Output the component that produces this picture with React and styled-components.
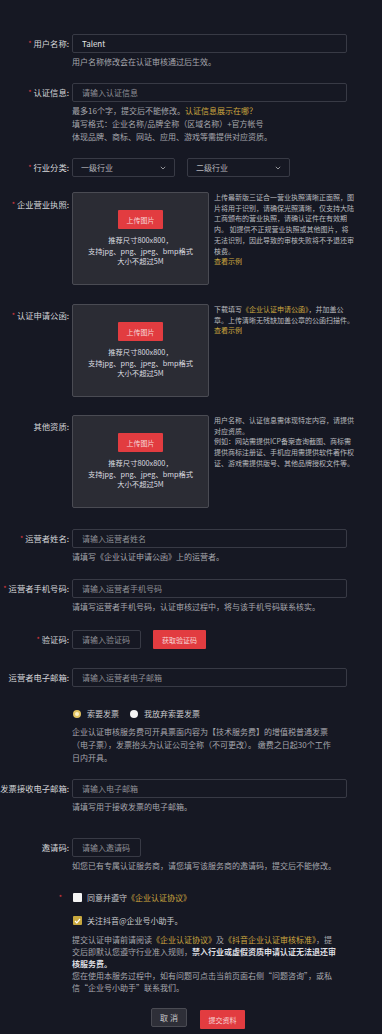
import React from 'react';
import styled, { createGlobalStyle } from 'styled-components';

const GlobalStyle = createGlobalStyle`
    body {
        margin: 0;
        background: #161823;
        font-family: "Noto Sans CJK SC", "Noto Sans", sans-serif;
    }
`

const Page = styled.div`
    width: 382px;
    padding: 34px 0 20px;
    box-sizing: border-box;
`

const Row = styled.div`
    display: grid;
    grid-template-columns: 69px 290px;
    column-gap: 3px;
    margin-top: ${p => p.$mt || 0}px;
`

const Label = styled.div`
    display: flex;
    justify-content: flex-end;
    align-items: flex-start;
    white-space: nowrap;
    font-size: 8.3px;
    line-height: 19px;
    color: #d5d6d9;
    padding-top: ${p => p.$pt || 0}px;
    padding-right: ${p => p.$pr || 0}px;
    box-sizing: border-box;
`

const Req = styled.span`
    color: #e23c42;
    font-size: 7px;
    margin-right: 2px;
`

const Field = styled.div`
    display: flex;
    flex-direction: column;
    align-items: flex-start;
`

const Input = styled.input`
    width: ${p => p.$w || 275}px;
    height: 19px;
    box-sizing: border-box;
    border: 1px solid #383a45;
    border-radius: 2px;
    background: transparent;
    color: #e4e5e8;
    font-family: inherit;
    font-size: 8px;
    padding: 0 9px;
    outline: none;

    &::placeholder {
        color: #8f9096;
    }
`

const Help = styled.div`
    font-size: 8px;
    line-height: 13px;
    color: #a6a7ad;
    margin-top: ${p => p.$mt ?? 2}px;
    white-space: nowrap;
`

const Gold = styled.span`
    color: #cda73f;
`

const SelectRow = styled.div`
    display: flex;
    gap: 12px;
`

const SelectBox = styled.div`
    width: 103px;
    height: 19px;
    box-sizing: border-box;
    border: 1px solid #383a45;
    border-radius: 2px;
    display: flex;
    align-items: center;
    justify-content: space-between;
    padding: 0 8px;
    font-size: 8px;
    color: #b4b5ba;
`

const UploadRow = styled.div`
    display: flex;
    gap: 5px;
`

const UploadBox = styled.div`
    width: 137px;
    height: 93px;
    box-sizing: border-box;
    background: #2b2c34;
    border: 1px solid #4a4b53;
    border-radius: 2px;
    display: flex;
    flex-direction: column;
    align-items: center;
    padding-top: 17px;
`

const RedButton = styled.div`
    width: ${p => p.$w || 45}px;
    height: 19px;
    background: #e23c40;
    border-radius: 1px;
    color: #f6d6d6;
    font-size: 7px;
    display: flex;
    align-items: center;
    justify-content: center;
    margin-top: ${p => p.$mt || 0}px;
`

const UploadSpec = styled.div`
    margin-top: 6px;
    font-size: 7.3px;
    line-height: 10.7px;
    color: #dcdde0;
    text-align: center;
`

const UploadTip = styled.div`
    font-size: 7px;
    line-height: 10.7px;
    color: #b9babf;
    white-space: nowrap;
`

const InlineRow = styled.div`
    display: flex;
    align-items: center;
    gap: 12px;
`

const RadioRow = styled.div`
    display: flex;
    align-items: center;
    height: 13px;
    font-size: 8px;
    color: #c9cacd;
`

const RadioDot = styled.span`
    width: 8px;
    height: 8px;
    box-sizing: border-box;
    border-radius: 50%;
    background: ${p => (p.$on ? '#fbf0c4' : '#f4f4f4')};
    border: ${p => (p.$on ? '2px solid #e1c260' : 'none')};
    margin: 0 6px 0 ${p => p.$ml || 0}px;
`

const CheckRow = styled.div`
    display: flex;
    align-items: center;
    height: 13px;
    font-size: 8px;
    color: #c9cacd;
    margin-top: ${p => p.$mt || 0}px;
`

const CheckBox = styled.span`
    width: 9px;
    height: 9px;
    box-sizing: border-box;
    border-radius: 1px;
    background: ${p => (p.$on ? '#c8a83e' : '#f4f4f4')};
    display: flex;
    align-items: center;
    justify-content: center;
    margin: 0 5px 0 1px;
`

const Para = styled.div`
    font-size: 8px;
    line-height: ${p => p.$lh || 13}px;
    color: #a6a7ad;
    margin-top: ${p => p.$mt || 0}px;
    white-space: nowrap;
`

const Strong = styled.span`
    color: #dedfe2;
    font-weight: 700;
`

const Actions = styled.div`
    display: flex;
    align-items: flex-start;
    gap: 13px;
    margin: 14px 0 0 151px;
`

const GhostButton = styled.div`
    width: 36px;
    height: 19px;
    box-sizing: border-box;
    background: #2e2f38;
    border: 1px solid #4a4b53;
    border-radius: 2px;
    color: #c9cacd;
    font-size: 8px;
    display: flex;
    align-items: center;
    justify-content: center;
`

const Chevron = () => (
    <svg width="6" height="4" viewBox="0 0 6 4" fill="none">
        <path d="M0.8 0.8 L3 3 L5.2 0.8" stroke="#a0a1a6" strokeWidth="0.9" />
    </svg>
)

const Check = () => (
    <svg width="7" height="6" viewBox="0 0 7 6" fill="none">
        <path d="M1 3 L2.8 4.8 L6 1" stroke="#fff" strokeWidth="1.2" />
    </svg>
)

function Upload({ children }) {
    return (
        <UploadRow>
            <UploadBox>
                <RedButton>上传图片</RedButton>
                <UploadSpec>
                    推荐尺寸800x800，<br />
                    支持jpg、png、jpeg、bmp格式<br />
                    大小不超过5M
                </UploadSpec>
            </UploadBox>
            <UploadTip>{children}</UploadTip>
        </UploadRow>
    )
}

export default function App() {
    return (
        <Page>
            <GlobalStyle />

            <Row>
                <Label><Req>*</Req>用户名称:</Label>
                <Field>
                    <Input defaultValue="Talent" />
                    <Help>用户名称修改会在认证审核通过后生效。</Help>
                </Field>
            </Row>

            <Row $mt={15}>
                <Label><Req>*</Req>认证信息:</Label>
                <Field>
                    <Input placeholder="请输入认证信息" />
                    <Help>
                        最多16个字，提交后不能修改。<Gold>认证信息展示在哪？</Gold><br />
                        填写格式：企业名称/品牌全称（区域名称）+官方帐号<br />
                        体现品牌、商标、网站、应用、游戏等需提供对应资质。
                    </Help>
                </Field>
            </Row>

            <Row $mt={15}>
                <Label><Req>*</Req>行业分类:</Label>
                <SelectRow>
                    <SelectBox>一级行业<Chevron /></SelectBox>
                    <SelectBox>二级行业<Chevron /></SelectBox>
                </SelectRow>
            </Row>

            <Row $mt={15}>
                <Label $pt={3}><Req>*</Req>企业营业执照:</Label>
                <Upload>
                    上传最新版三证合一营业执照清晰正面照，图<br />
                    片将用于识别，请确保光照清晰，仅支持大陆<br />
                    工商颁布的营业执照，请确认证件在有效期<br />
                    内。 如提供不正规营业执照或其他图片，将<br />
                    无法识别，因此导致的审核失败将不予退还审<br />
                    核费。<br />
                    <Gold>查看示例</Gold>
                </Upload>
            </Row>

            <Row $mt={19}>
                <Label $pt={2}><Req>*</Req>认证申请公函:</Label>
                <Upload>
                    下载填写<Gold>《企业认证申请公函》</Gold>，并加盖公<br />
                    章。上传清晰无残缺加盖公章的公函扫描件。<br />
                    <Gold>查看示例</Gold>
                </Upload>
            </Row>

            <Row $mt={18}>
                <Label $pt={2}>其他资质:</Label>
                <Upload>
                    用户名称、认证信息需体现特定内容，请提供<br />
                    对应资质。<br />
                    例如：网站需提供ICP备案查询截图、商标需<br />
                    提供商标注册证、手机应用需提供软件著作权<br />
                    证、游戏需提供版号、其他品牌授权文件等。
                </Upload>
            </Row>

            <Row $mt={21}>
                <Label><Req>*</Req>运营者姓名:</Label>
                <Field>
                    <Input placeholder="请输入运营者姓名" />
                    <Help>请填写《企业认证申请公函》上的运营者。</Help>
                </Field>
            </Row>

            <Row $mt={16}>
                <Label><Req>*</Req>运营者手机号码:</Label>
                <Field>
                    <Input placeholder="请输入运营者手机号码" />
                    <Help>请填写运营者手机号码，认证审核过程中，将与该手机号码联系核实。</Help>
                </Field>
            </Row>

            <Row $mt={17}>
                <Label><Req>*</Req>验证码:</Label>
                <InlineRow>
                    <Input $w={69} placeholder="请输入验证码" />
                    <RedButton $w={53}>获取验证码</RedButton>
                </InlineRow>
            </Row>

            <Row $mt={19}>
                <Label>运营者电子邮箱:</Label>
                <Input placeholder="请输入运营者电子邮箱" />
            </Row>

            <Row $mt={20}>
                <div />
                <Field>
                    <RadioRow>
                        <RadioDot $on $ml={1} />索要发票
                        <RadioDot $ml={11} />我放弃索要发票
                    </RadioRow>
                    <Para $mt={5}>
                        企业认证审核服务费可开具票面内容为【技术服务费】的增值税普通发票<br />
                        （电子票），发票抬头为认证公司全称（不可更改）。 缴费之日起30个工作<br />
                        日内开具。
                    </Para>
                </Field>
            </Row>

            <Row $mt={15}>
                <Label>发票接收电子邮箱:</Label>
                <Field>
                    <Input placeholder="请输入电子邮箱" />
                    <Help>请填写用于接收发票的电子邮箱。</Help>
                </Field>
            </Row>

            <Row $mt={25}>
                <Label>邀请码:</Label>
                <Field>
                    <Input $w={69} placeholder="请输入邀请码" />
                    <Help>如您已有专属认证服务商，请您填写该服务商的邀请码，提交后不能修改。</Help>
                </Field>
            </Row>

            <Row $mt={19}>
                <Label $pr={5} style={{ lineHeight: '13px' }}><Req>*</Req></Label>
                <Field>
                    <CheckRow>
                        <CheckBox />同意并遵守<Gold>《企业认证协议》</Gold>
                    </CheckRow>
                    <CheckRow $mt={10}>
                        <CheckBox $on><Check /></CheckBox>关注抖音@企业号小助手。
                    </CheckRow>
                    <Para $mt={7} $lh={12}>
                        提交认证申请前请阅读<Gold>《企业认证协议》</Gold>及<Gold>《抖音企业认证审核标准》</Gold>，提<br />
                        交后即默认您遵守行业准入规则，<Strong>禁入行业或虚假资质申请认证无法退还审</Strong><br />
                        <Strong>核服务费。</Strong><br />
                        您在使用本服务过程中，如有问题可点击当前页面右侧“问题咨询”，或私<br />
                        信“企业号小助手”联系我们。
                    </Para>
                </Field>
            </Row>

            <Actions>
                <GhostButton>取 消</GhostButton>
                <RedButton $mt={2}>提交资料</RedButton>
            </Actions>
        </Page>
    )
}
